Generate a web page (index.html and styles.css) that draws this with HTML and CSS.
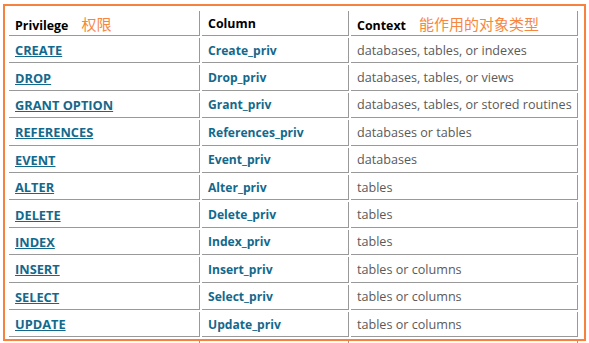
FILE: index.html
```html
<!DOCTYPE html>
<html>
<head>
<meta charset="utf-8">
<link rel="stylesheet" href="styles.css">
</head>
<body>
<div class="page">
  <table class="priv">
    <colgroup>
      <col class="c1"><col class="c2"><col class="c3">
    </colgroup>
    <thead>
      <tr>
        <th>Privilege<span class="note n1">权限</span></th>
        <th>Column</th>
        <th>Context<span class="note n2">能作用的对象类型</span></th>
      </tr>
    </thead>
    <tbody>
      <tr><td><a href="#">CREATE</a></td><td class="col">Create_priv</td><td class="ctx">databases, tables, or indexes</td></tr>
      <tr><td><a href="#">DROP</a></td><td class="col">Drop_priv</td><td class="ctx">databases, tables, or views</td></tr>
      <tr><td><a href="#">GRANT OPTION</a></td><td class="col">Grant_priv</td><td class="ctx">databases, tables, or stored routines</td></tr>
      <tr><td><a href="#">REFERENCES</a></td><td class="col">References_priv</td><td class="ctx">databases or tables</td></tr>
      <tr><td><a href="#">EVENT</a></td><td class="col">Event_priv</td><td class="ctx">databases</td></tr>
      <tr><td><a href="#">ALTER</a></td><td class="col">Alter_priv</td><td class="ctx">tables</td></tr>
      <tr><td><a href="#">DELETE</a></td><td class="col">Delete_priv</td><td class="ctx">tables</td></tr>
      <tr><td><a href="#">INDEX</a></td><td class="col">Index_priv</td><td class="ctx">tables</td></tr>
      <tr><td><a href="#">INSERT</a></td><td class="col">Insert_priv</td><td class="ctx">tables or columns</td></tr>
      <tr><td><a href="#">SELECT</a></td><td class="col">Select_priv</td><td class="ctx">tables or columns</td></tr>
      <tr><td><a href="#">UPDATE</a></td><td class="col">Update_priv</td><td class="ctx">tables or columns</td></tr>
      <tr class="tail"><td></td><td></td><td></td></tr>
    </tbody>
  </table>
  <div class="frame"></div>
</div>
</body>
</html>
```

FILE: styles.css
```css
html, body {
  margin: 0;
  padding: 0;
  overflow: hidden;
  background: #ffffff;
}

.page {
  position: relative;
  width: 589px;
  height: 343px;
  overflow: hidden;
  font-family: "Open Sans", "Noto Sans CJK SC", sans-serif;
  font-size: 13px;
}

.priv {
  border-collapse: separate;
  border-spacing: 2px;
  margin: 9px 0 0 7px;
  table-layout: fixed;
  width: 571px;
}

.c1 { width: 191px; }
.c2 { width: 147px; }
.c3 { width: 227px; }

.priv th,
.priv td {
  border-right: 1px solid #999999;
  border-bottom: 1px solid #999999;
  padding: 0 0 0 6px;
  text-align: left;
  vertical-align: middle;
  white-space: nowrap;
  box-sizing: border-box;
}

.priv th {
  height: 25px;
  font-weight: 700;
  font-size: 12.4px;
  color: #000000;
}

.priv td {
  height: 25.4px;
}

.priv a {
  color: #13698c;
  font-weight: 700;
  font-size: 12.8px;
  text-decoration: underline;
}

.priv .col {
  color: #13698c;
  font-weight: 700;
  font-size: 12.1px;
}

.priv .ctx {
  color: #5a5a5a;
  font-weight: 400;
  font-size: 12.6px;
}

.note {
  font-family: "Noto Sans CJK SC", sans-serif;
  font-weight: 400;
  font-size: 15px;
  color: #f7863e;
}

.n1 { margin-left: 13px; }
.n2 { margin-left: 13px; }

.frame {
  position: absolute;
  left: 3px;
  top: 4px;
  width: 583px;
  height: 337px;
  box-sizing: border-box;
  border: 2px solid #f7813f;
  pointer-events: none;
}
```
